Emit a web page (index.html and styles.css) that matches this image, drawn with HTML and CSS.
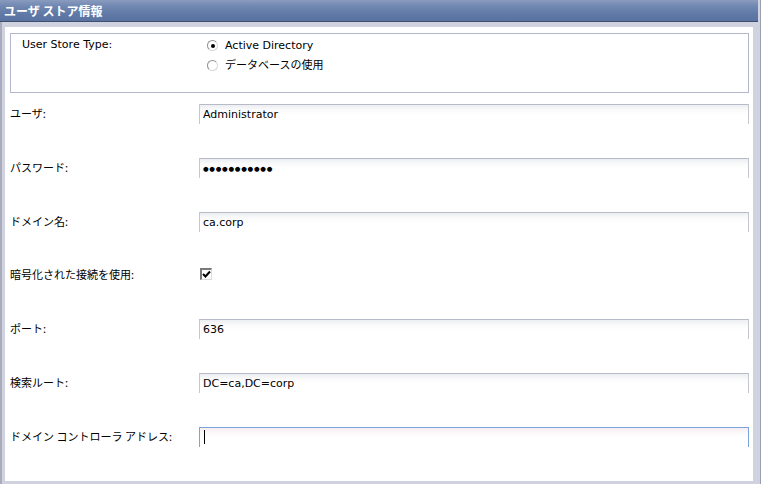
FILE: index.html
```html
<!DOCTYPE html>
<html lang="ja">
<head>
<meta charset="utf-8">
<title>ユーザ ストア情報</title>
<link rel="stylesheet" href="styles.css">
</head>
<body>
<div class="frame">
  <div class="header">ユーザ ストア情報</div>
  <div class="panel">
    <div class="typebox">
      <div class="type-label">User Store Type:</div>
      <div class="radios">
        <div class="radio-row"><span class="radio checked"></span><span>Active Directory</span></div>
        <div class="radio-row"><span class="radio"></span><span>データベースの使用</span></div>
      </div>
    </div>
    <div class="rows">
      <div class="row"><div class="label">ユーザ:</div><div class="field">Administrator</div></div>
      <div class="row"><div class="label">パスワード:</div><div class="field pwd">●●●●●●●●●●●</div></div>
      <div class="row"><div class="label">ドメイン名:</div><div class="field">ca.corp</div></div>
      <div class="row"><div class="label">暗号化された接続を使用:</div><div class="checkcell"><span class="checkbox"><svg width="9" height="9" viewBox="0 0 9 9"><path d="M1 4 L3.5 6.5 L8 1.5" fill="none" stroke="#000" stroke-width="2"/></svg></span></div></div>
      <div class="row"><div class="label">ポート:</div><div class="field">636</div></div>
      <div class="row"><div class="label">検索ルート:</div><div class="field">DC=ca,DC=corp</div></div>
      <div class="row"><div class="label">ドメイン コントローラ アドレス:</div><div class="field focus"><span class="caret"></span></div></div>
    </div>
  </div>
</div>
</body>
</html>
```
FILE: styles.css
```css
* { box-sizing: border-box; }
html, body { margin: 0; padding: 0; background: #ffffff; }
body {
  font-family: "DejaVu Sans", "Noto Sans CJK JP", sans-serif;
  font-size: 11px;
  color: #000;
}
.frame {
  width: 761px;
  height: 484px;
  background: #d0d3df;
  border-left: 2px solid #a9acbb;
  border-right: 1px solid #9a9eae;
  display: flex;
  flex-direction: column;
}
.header {
  height: 22px;
  margin-left: -2px;
  margin-right: 2px;
  background: linear-gradient(to bottom, #8a9bbf 0%, #7087b1 30%, #5f78a5 70%, #5a72a0 100%);
  border-bottom: 1px solid #3d4f6e;
  color: #fff;
  font-weight: bold;
  font-size: 12px;
  line-height: 21px;
  padding-left: 4px;
  font-family: "Noto Sans CJK JP", "DejaVu Sans", sans-serif;
}
.panel {
  margin: 5px 7px 5px 3px;
  background: #fff;
  flex: 1;
  padding: 6px 4px 0 5px;
}
.typebox {
  height: 60px;
  border: 1px solid #b4b6cc;
  display: flex;
  padding: 5px 0 0 11px;
}
.type-label { width: 185px; line-height: 12px; }
.radios { display: flex; flex-direction: column; gap: 7px; }
.radio-row { display: flex; align-items: center; gap: 7px; line-height: 12px; height: 13px; }
.radio {
  width: 11px; height: 11px;
  border-radius: 50%;
  border: 1px solid #8e8f8f;
  border-bottom-color: #d8d8d8;
  border-right-color: #d8d8d8;
  background: #fff;
  position: relative;
}
.radio.checked::after {
  content: "";
  position: absolute;
  left: 2.5px; top: 2.5px;
  width: 4px; height: 4px;
  border-radius: 50%;
  background: #000;
}
.rows { margin-top: 11px; display: flex; flex-direction: column; }
.row {
  display: grid;
  grid-template-columns: 189px 1fr;
  height: 53.8px;
  align-items: start;
}
.label { line-height: 18px; padding-top: 0; font-family: "Noto Sans CJK JP", "DejaVu Sans", sans-serif; }
.field {
  height: 20px;
  border: 1px solid #b7bbc8;
  border-bottom: none;
  border-left-color: #c6c8cf;
  border-right-color: #c6c8cf;
  background: linear-gradient(to bottom, #eceef1 0px, #fafafb 5px, #ffffff 10px);
  padding: 3px 0 0 3px;
  line-height: 14px;
  white-space: nowrap;
}
.field.pwd { font-size: 6.5px; letter-spacing: 0.7px; line-height: 14px; padding-top: 3px; }
.field.focus {
  border-color: #7ba5da;
  background: linear-gradient(to bottom, #f6eef2 0px, #fcf9fb 5px, #ffffff 10px);
  padding-top: 2px;
}
.caret { display: inline-block; width: 1px; height: 14px; background: #000; margin-left: 1px; vertical-align: top; }
.checkcell { padding-top: 3px; }
.checkbox {
  display: block;
  width: 12px; height: 12px;
  margin-left: 1px;
  border: 2px solid #7a7a7a;
  border-right: 1px solid #dcdcdc;
  border-bottom: 1px solid #dcdcdc;
  background: #fff;
}
.checkbox svg { display: block; }
```
